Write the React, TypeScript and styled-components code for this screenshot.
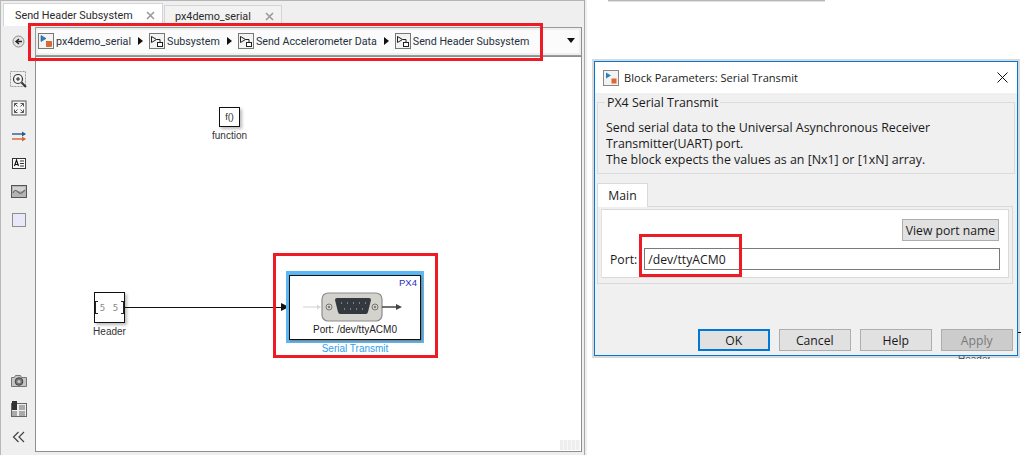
import * as React from 'react'
import styled, { createGlobalStyle } from 'styled-components'

const GlobalStyle = createGlobalStyle`
  html, body {
    margin: 0;
    padding: 0;
    background: #fff;
  }
  body {
    font-family: "Noto Sans", "Liberation Sans", sans-serif;
    color: #1c1c1c;
  }
`

const Page = styled.div`
  position: relative;
  width: 1030px;
  height: 455px;
  overflow: hidden;
  display: flex;
  background: #fff;
`

const ModelWindow = styled.div`
  flex: none;
  width: 585px;
  height: 455px;
  box-sizing: border-box;
  border-top: 1px solid #b4b4b4;
  border-left: 1px solid #b8b8b8;
  border-right: 1px solid #a8a8a8;
  background: #efefef;
  box-shadow: 2px 0 0 #eeeeee;
  display: flex;
  flex-direction: column;
`

const TabStrip = styled.div`
  height: 25px;
  flex: none;
  display: flex;
  align-items: flex-end;
  padding-left: 2px;
`

const ModelTab = styled.div<{ $active?: boolean }>`
  box-sizing: border-box;
  height: ${p => (p.$active ? 23 : 21)}px;
  width: ${p => (p.$active ? 160 : 118)}px;
  margin-right: ${p => (p.$active ? 1 : 0)}px;
  padding: 0 7px 0 ${p => (p.$active ? 11 : 10)}px;
  border: 1px solid #d4d4d4;
  border-bottom: none;
  background: ${p => (p.$active ? '#fff' : '#f2f2f2')};
  display: flex;
  align-items: center;
  justify-content: space-between;
  font-family: Roboto, sans-serif;
  font-size: 10.8px;
  color: #2a2a2a;
`

const TabClose = styled.svg`
  width: 9px;
  height: 9px;
  flex: none;
  stroke: #9a9a9a;
  stroke-width: 1.6;
`

const CrumbBar = styled.div`
  flex: none;
  height: 30px;
  display: flex;
  align-items: center;
`

const BackSlot = styled.div`
  flex: none;
  width: 34px;
  padding-left: 1px;
  box-sizing: border-box;
  display: flex;
  justify-content: center;
`

const Crumbs = styled.div`
  flex: 1;
  height: 29px;
  box-sizing: border-box;
  margin-right: 2px;
  border: 1px solid #9a9a9a;
  border-right-color: #8e8e8e;
  padding: 2px;
  display: flex;
`

const CrumbInner = styled.div`
  flex: 1;
  background: #fbfbfb;
  display: flex;
  align-items: center;
  font-family: Roboto, sans-serif;
  font-size: 10.7px;
  color: #26323e;
  position: relative;
`

const CrumbIcon = styled.svg`
  width: 16px;
  height: 16px;
  flex: none;
  margin-right: 2px;
`

const CrumbArrow = styled.span`
  width: 0;
  height: 0;
  margin: 0 6px 0 7px;
  border-left: 5px solid #111;
  border-top: 4.5px solid transparent;
  border-bottom: 4.5px solid transparent;
`

const DropArrow = styled.span`
  position: absolute;
  right: 4px;
  top: 8px;
  width: 0;
  height: 0;
  border-top: 5px solid #111;
  border-left: 4.5px solid transparent;
  border-right: 4.5px solid transparent;
`

const Body = styled.div`
  flex: 1;
  display: flex;
  min-height: 0;
  padding-bottom: 3px;
`

const Palette = styled.div`
  flex: none;
  width: 34px;
  display: flex;
  flex-direction: column;
  align-items: center;
  padding: 15px 0 6px 1px;
  box-sizing: border-box;
`

const PaletteIcon = styled.svg<{ $last?: boolean }>`
  width: 18px;
  height: 18px;
  flex: none;
  margin-bottom: ${p => (p.$last ? 0 : 10)}px;
`

const PaletteSpacer = styled.div`
  flex: 1;
`

const Canvas = styled.div`
  flex: 1;
  margin-right: 2px;
  position: relative;
  background: #fff;
  border: 1px solid #8e8e8e;
`

const FunctionBlock = styled.div`
  position: absolute;
  left: 183px;
  top: 50px;
  width: 21px;
  height: 20px;
  box-sizing: border-box;
  border: 1px solid #111;
  background: #fff;
  box-shadow: 2px 2px 3px #bbb;
  display: flex;
  align-items: center;
  justify-content: center;
  font-family: "Liberation Sans", sans-serif;
  font-size: 9px;
`

const BlockLabel = styled.div<{ $left: number; $top: number; $width: number; $color?: string }>`
  position: absolute;
  left: ${p => p.$left}px;
  top: ${p => p.$top}px;
  width: ${p => p.$width}px;
  text-align: center;
  font-family: "Liberation Sans", sans-serif;
  font-size: 10px;
  line-height: 11px;
  color: ${p => p.$color || '#333'};
`

const HeaderBlock = styled.div`
  position: absolute;
  left: 58px;
  top: 235px;
  width: 31px;
  height: 31px;
  box-sizing: border-box;
  border: 1px solid #111;
  background: #fff;
  box-shadow: 2px 2px 3px #bbb;
  display: flex;
  align-items: center;
  justify-content: center;
`

const Bracket = styled.span<{ $side: 'left' | 'right' }>`
  position: absolute;
  top: 8px;
  ${p => p.$side}: 0;
  width: 2px;
  height: 11px;
  border: 1.5px solid #222;
  border-${p => (p.$side === 'left' ? 'right' : 'left')}: none;
`

const HeaderValue = styled.span`
  font-family: "DejaVu Sans Mono", monospace;
  font-size: 9px;
  letter-spacing: 1px;
  color: #888;
  white-space: pre;
`

const Wire = styled.div`
  position: absolute;
  left: 89px;
  top: 250px;
  width: 160px;
  height: 1px;
  background: #111;
`

const WireHead = styled.span`
  position: absolute;
  left: 245px;
  top: 246px;
  width: 0;
  height: 0;
  border-left: 8px solid #111;
  border-top: 4.5px solid transparent;
  border-bottom: 4.5px solid transparent;
`

const TransmitHalo = styled.div`
  position: absolute;
  left: 250px;
  top: 214px;
  width: 138px;
  height: 72px;
  box-sizing: border-box;
  background: #5cb8f5;
  padding: 4px 3px 3px 3px;
`

const TransmitBlock = styled.div`
  position: relative;
  height: 100%;
  box-sizing: border-box;
  border: 1px solid #111;
  background: #fff;
  box-shadow: 1px 1px 2px #777;
  font-family: "Liberation Sans", sans-serif;
  font-size: 9px;
  display: flex;
  flex-direction: column;
  align-items: center;
`

const Vendor = styled.span`
  position: absolute;
  right: 3px;
  top: 1px;
  color: #2a2ac8;
  font-size: 9.5px;
  line-height: 11px;
`

const PortArt = styled.svg`
  flex: none;
  width: 104px;
  height: 32px;
  margin-top: 15px;
`

const PortLabel = styled.span`
  font-size: 10px;
  line-height: 11px;
  margin-top: 1px;
  color: #222;
`

const ResizeGrip = styled.div`
  position: absolute;
  right: 1px;
  bottom: 1px;
  width: 20px;
  height: 10px;
  background: repeating-linear-gradient(90deg, #eee 0 3px, #f7f7f7 3px 4px);
`

const Backdrop = styled.div`
  flex: 1;
  position: relative;
  padding: 61px 12px 0 9px;
  box-sizing: border-box;
`

const TopSliver = styled.div`
  position: absolute;
  left: 23px;
  top: 0;
  width: 217px;
  height: 1px;
  background: #b8b8b8;
  box-shadow: 0 1px 0 #e0e0e0;
`

const HiddenCaption = styled.div`
  position: absolute;
  left: 373px;
  top: 356px;
  width: 32px;
  height: 3px;
  overflow: hidden;
  font-family: "Liberation Sans", sans-serif;
  font-size: 10px;
  line-height: 11px;
  color: #555;
`

const HiddenCaptionText = styled.div`
  margin-top: -2px;
`

const HiddenWire = styled.div`
  position: absolute;
  left: 433px;
  top: 332px;
  width: 3px;
  height: 1px;
  background: #111;
`

const Dialog = styled.div`
  position: relative;
  width: 424px;
  height: 295px;
  box-sizing: border-box;
  border: 1px solid #0078d7;
  background: #f0f0f0;
  box-shadow: 0 0 0 2px #d9d9d9;
  display: flex;
  flex-direction: column;
  font-family: "Open Sans", sans-serif;
  font-size: 12.2px;
  color: #1a1a1a;
`

const TitleBar = styled.div`
  flex: none;
  height: 31px;
  background: #fff;
  display: flex;
  align-items: center;
  padding: 0 9px 0 8px;
  gap: 3px;
  font-size: 11.1px;
`

const TitleText = styled.span`
  flex: 1;
`

const CloseIcon = styled.svg`
  width: 11px;
  height: 11px;
  stroke: #111;
  stroke-width: 1;
`

const Group = styled.fieldset`
  flex: none;
  margin: 1px 2px 0 2px;
  padding: 10px 8px 0 8px;
  height: 80px;
  box-sizing: border-box;
  border: 1px solid #dcdcdc;
  min-inline-size: 0;
`

const GroupTitle = styled.legend`
  padding: 0 2px;
  margin-left: -1px;
  position: relative;
  top: 1px;
  font-size: 12.4px;
  line-height: 16px;
`

const GroupLine = styled.div`
  line-height: 16px;
  font-size: 12.4px;
  white-space: nowrap;
`

const TabHead = styled.div`
  flex: none;
  box-sizing: border-box;
  width: 51px;
  height: 24px;
  margin: 9px 0 -1px 2px;
  background: #fff;
  border: 1px solid #d9d9d9;
  border-bottom: none;
  position: relative;
  z-index: 1;
  display: flex;
  align-items: center;
  justify-content: center;
`

const TabPanel = styled.div`
  flex: none;
  box-sizing: border-box;
  width: 416px;
  height: 78px;
  margin-left: 2px;
  border: 1px solid #d9d9d9;
  padding: 2px 3px;
`

const TabInner = styled.div`
  box-sizing: border-box;
  height: 69px;
  background: #fff;
  border: 1px solid #d9d9d9;
  border-left-color: #e2e2e2;
  width: 408px;
  padding: 9px 9px 0 8px;
  display: flex;
  flex-direction: column;
  align-items: flex-end;
  gap: 7px;
`

const PlainButton = styled.button<{ $focused?: boolean; $disabled?: boolean }>`
  box-sizing: border-box;
  font-family: "Open Sans", sans-serif;
  font-size: 12.2px;
  padding: 0;
  height: 22px;
  background: ${p => (p.$disabled ? '#cccccc' : '#e1e1e1')};
  border: ${p => (p.$focused ? '2px solid #0078d7' : '1px solid #adadad')};
  color: ${p => (p.$disabled ? '#7a7a7a' : '#1a1a1a')};
`

const ViewButton = styled(PlainButton)`
  width: 97px;
`

const PortRow = styled.div`
  align-self: stretch;
  margin-right: -1px;
  display: flex;
  align-items: center;
  gap: 7px;
`

const PortInput = styled.div`
  flex: 1;
  box-sizing: border-box;
  height: 22px;
  border: 1px solid #7a7a7a;
  padding-left: 3px;
  display: flex;
  align-items: center;
  background: #fff;
`

const ActionRow = styled.div`
  flex: 1;
  display: flex;
  justify-content: flex-end;
  align-items: flex-end;
  gap: 8.5px;
  padding: 0 4px 4px 0;
`

const ActionButton = styled(PlainButton)`
  width: 72.5px;
`

const RedBox = styled.div<{ $x: number; $y: number; $w: number; $h: number }>`
  position: absolute;
  left: ${p => p.$x}px;
  top: ${p => p.$y}px;
  width: ${p => p.$w}px;
  height: ${p => p.$h}px;
  box-sizing: border-box;
  border: 3px solid #ed1c24;
  pointer-events: none;
`

const ModelGlyph = () => (
  <CrumbIcon viewBox="0 0 16 16">
    <rect x="0.5" y="0.5" width="15" height="15" fill="#f3f3f3" stroke="#777" />
    <path d="M3 2.5v6l5-3z" fill="#2a7fc0" stroke="#1c5a8c" strokeWidth="0.6" />
    <rect x="8.5" y="8.5" width="5" height="5" fill="#e0662a" stroke="#a94a1a" strokeWidth="0.6" />
  </CrumbIcon>
)

const SubsystemGlyph = () => (
  <CrumbIcon viewBox="0 0 16 16">
    <rect x="0.5" y="0.5" width="15" height="15" fill="#f3f3f3" stroke="#777" />
    <path d="M2.5 3.5v6l5-3zM7.5 6.5h3.5v3" fill="none" stroke="#222" />
    <rect x="8.5" y="9.5" width="5" height="4" fill="#fff" stroke="#222" />
  </CrumbIcon>
)

const Crumb = ({ glyph, label, last }: { glyph: React.ReactNode; label: string; last?: boolean }) => (
  <>
    {glyph}
    <span>{label}</span>
    {!last && <CrumbArrow />}
  </>
)

export default function App() {
  return (
    <Page>
      <GlobalStyle />
      <ModelWindow>
        <TabStrip>
          <ModelTab $active>
            Send Header Subsystem
            <TabClose viewBox="0 0 9 9"><path d="M1 1l7 7M8 1l-7 7" /></TabClose>
          </ModelTab>
          <ModelTab>
            px4demo_serial
            <TabClose viewBox="0 0 9 9"><path d="M1 1l7 7M8 1l-7 7" /></TabClose>
          </ModelTab>
        </TabStrip>
        <CrumbBar>
          <BackSlot>
            <svg width="13" height="13" viewBox="0 0 13 13">
              <circle cx="6.5" cy="6.5" r="5.5" fill="#e4e4e4" stroke="#8a8a8a" />
              <path d="M10 6.5H5M7 4L4 6.5 7 9" fill="none" stroke="#222" strokeWidth="1.4" />
            </svg>
          </BackSlot>
          <Crumbs>
            <CrumbInner>
              <Crumb glyph={<ModelGlyph />} label="px4demo_serial" />
              <Crumb glyph={<SubsystemGlyph />} label="Subsystem" />
              <Crumb glyph={<SubsystemGlyph />} label="Send Accelerometer Data" />
              <Crumb glyph={<SubsystemGlyph />} label="Send Header Subsystem" last />
              <DropArrow />
            </CrumbInner>
          </Crumbs>
        </CrumbBar>
        <Body>
          <Palette>
            <PaletteIcon viewBox="0 0 18 18">
              <rect x="0.5" y="0.5" width="15" height="15" fill="none" stroke="#999" strokeDasharray="2 1" />
              <circle cx="8" cy="8" r="4.5" fill="#f4f4f4" stroke="#333" strokeWidth="1.2" />
              <path d="M6 8h4M8 6v4" stroke="#222" />
              <path d="M11.500 11.500l4.500 4.500" stroke="#333" strokeWidth="2" />
            </PaletteIcon>
            <PaletteIcon viewBox="0 0 18 18">
              <rect x="2" y="2" width="14" height="14" fill="#f6f6f6" stroke="#555" />
              <path d="M4.500 7.500v-3h3M10.500 4.500h3v3M13.500 10.500v3h-3M7.500 13.500h-3v-3M4.500 4.500l3 3M13.500 4.500l-3 3M13.500 13.500l-3-3M4.500 13.500l3-3" fill="none" stroke="#555" />
            </PaletteIcon>
            <PaletteIcon viewBox="0 0 18 18">
              <path d="M2 7h13" stroke="#2b5a92" strokeWidth="1.4" />
              <path d="M12 4.500L16 7l-4 2.500z" fill="#2b5a92" />
              <path d="M2 12h13" stroke="#d0682c" strokeWidth="1.4" />
              <path d="M12 9.500L16 12l-4 2.500z" fill="#d0682c" />
            </PaletteIcon>
            <PaletteIcon viewBox="0 0 18 18">
              <rect x="2.500" y="3.500" width="13" height="10" fill="#fafafa" stroke="#333" />
              <path d="M4.500 11l2-6 2 6M5.200 9.500h2.600" fill="none" stroke="#111" strokeWidth="1.1" />
              <path d="M10 6h4M10 8.500h4M10 11h4" stroke="#333" />
            </PaletteIcon>
            <PaletteIcon viewBox="0 0 18 18">
              <rect x="1.500" y="2.500" width="15" height="12" fill="#b4b4b4" stroke="#555" />
              <path d="M3 4h12v4H3z" fill="#d2d2d2" />
              <path d="M3 10c2-4 3-3 5-1s3 2 7-2" fill="none" stroke="#6a6a6a" strokeWidth="1.2" />
            </PaletteIcon>
            <PaletteIcon viewBox="0 0 18 18">
              <rect x="2.500" y="2.500" width="13" height="13" fill="#e8e8fa" stroke="#8e8e8e" />
            </PaletteIcon>
            <PaletteSpacer />
            <PaletteIcon viewBox="0 0 18 18">
              <path d="M1.500 5.500h3l1-2h5l1 2h5v9h-15z" fill="#c4c4c4" stroke="#777" />
              <circle cx="9" cy="9.500" r="3.800" fill="#777" stroke="#444" />
              <circle cx="9" cy="9.500" r="1.600" fill="#c8c8c8" />
            </PaletteIcon>
            <PaletteIcon viewBox="0 0 18 18">
              <rect x="1.500" y="3.500" width="15" height="13" fill="#eee" stroke="#666" />
              <rect x="2" y="1" width="5" height="9" fill="#333" />
              <path d="M2 11h5v5H2z" fill="#aaa" />
              <path d="M9 5h6v5H9zM9 11h6v5H9z" fill="#aaa" />
            </PaletteIcon>
            <PaletteIcon $last viewBox="0 0 18 18">
              <path d="M8.500 4L3.500 9l5 5M14 4L9 9l5 5" fill="none" stroke="#444" strokeWidth="1.2" />
            </PaletteIcon>
          </Palette>
          <Canvas>
            <FunctionBlock>f()</FunctionBlock>
            <BlockLabel $left={163} $top={73} $width={61}>function</BlockLabel>
            <HeaderBlock>
              <Bracket $side="left" />
              <HeaderValue>5 5</HeaderValue>
              <Bracket $side="right" />
            </HeaderBlock>
            <BlockLabel $left={44} $top={269} $width={59}>Header</BlockLabel>
            <Wire />
            <WireHead />
            <TransmitHalo>
              <TransmitBlock>
                <Vendor>PX4</Vendor>
                <PortArt viewBox="0 0 104 32">
                  <path d="M0 16h15" stroke="#d8d8d8" strokeWidth="1.2" />
                  <path d="M14 13.500l4 2.500-4 2.500z" fill="#d8d8d8" />
                  <rect x="19" y="2" width="60" height="28" rx="6" fill="#d4d2cc" stroke="#8c8c8c" strokeWidth="1.200" />
                  <circle cx="26" cy="16" r="3" fill="#cfcfc8" stroke="#777" />
                  <circle cx="26" cy="16" r="1" fill="#666" />
                  <circle cx="72" cy="16" r="3" fill="#cfcfc8" stroke="#777" />
                  <circle cx="72" cy="16" r="1" fill="#666" />
                  <path d="M32 9q0-2 2-2h32q2 0 2 2l-3 12q-.5 2-2 2H37q-1.500 0-2-2z" fill="#33393f" />
                  <path d="M38 12h1M44 12h1M50 12h1M56 12h1M62 12h1M41 18h1M47 18h1M53 18h1M59 18h1" stroke="#ccc" />
                  <path d="M79 16h15" stroke="#444" strokeWidth="1.500" />
                  <path d="M93 13l6 3-6 3z" fill="#444" />
                </PortArt>
                <PortLabel>Port: /dev/ttyACM0</PortLabel>
              </TransmitBlock>
            </TransmitHalo>
            <BlockLabel $left={270} $top={286} $width={98} $color="#2f9ff0">Serial Transmit</BlockLabel>
            <ResizeGrip />
          </Canvas>
        </Body>
      </ModelWindow>
      <Backdrop>
        <TopSliver />
        <Dialog>
          <TitleBar>
            <CrumbIcon viewBox="0 0 16 16">
              <rect x="0.500" y="0.500" width="15" height="15" fill="#f3f3f3" stroke="#888" />
              <path d="M3 2.500v6l5-3z" fill="#2a7fc0" />
              <rect x="8.500" y="8.500" width="5" height="5" fill="#e0662a" />
            </CrumbIcon>
            <TitleText>Block Parameters: Serial Transmit</TitleText>
            <CloseIcon viewBox="0 0 11 11"><path d="M0.500 0.500l10 10M10.500 0.500l-10 10" /></CloseIcon>
          </TitleBar>
          <Group>
            <GroupTitle>PX4 Serial Transmit</GroupTitle>
            <GroupLine>Send serial data to the Universal Asynchronous Receiver</GroupLine>
            <GroupLine>Transmitter(UART) port.</GroupLine>
            <GroupLine>The block expects the values as an [Nx1] or [1xN] array.</GroupLine>
          </Group>
          <TabHead>Main</TabHead>
          <TabPanel>
            <TabInner>
              <ViewButton>View port name</ViewButton>
              <PortRow>
                Port:
                <PortInput>/dev/ttyACM0</PortInput>
              </PortRow>
            </TabInner>
          </TabPanel>
          <ActionRow>
            <ActionButton $focused>OK</ActionButton>
            <ActionButton>Cancel</ActionButton>
            <ActionButton>Help</ActionButton>
            <ActionButton $disabled>Apply</ActionButton>
          </ActionRow>
        </Dialog>
        <HiddenCaption><HiddenCaptionText>Header</HiddenCaptionText></HiddenCaption>
        <HiddenWire />
      </Backdrop>
      <RedBox $x={28} $y={23} $w={515} $h={38} />
      <RedBox $x={273} $y={253} $w={165} $h={105} />
      <RedBox $x={639} $y={234} $w={103} $h={43} />
    </Page>
  )
}
